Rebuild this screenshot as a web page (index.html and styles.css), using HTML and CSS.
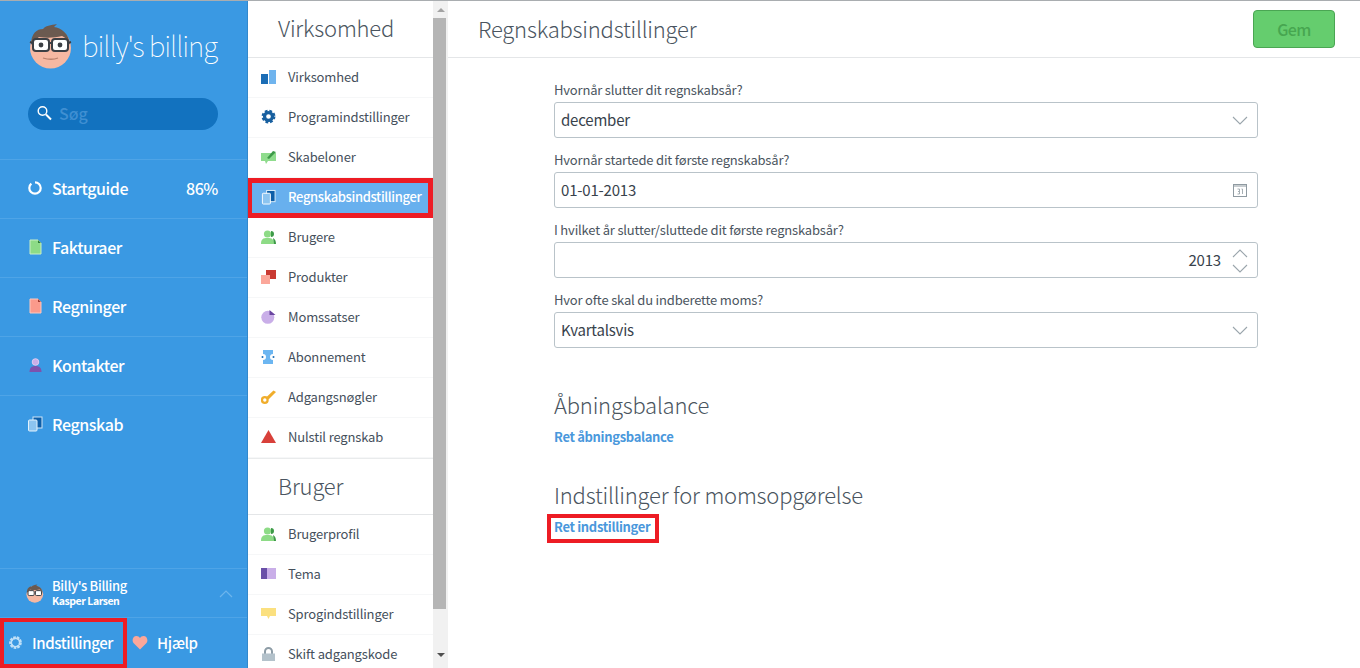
FILE: index.html
```html
<!DOCTYPE html>
<html lang="da">
<head>
<meta charset="utf-8">
<title>Regnskabsindstillinger</title>
<link rel="stylesheet" href="styles.css">
</head>
<body>
<div class="topline"></div>
<div class="app">
  <aside class="sidebar">
    <div class="brand">
      <div class="logo">
        <svg class="face" viewBox="0 0 44 46" width="44" height="46">
          <circle cx="21.5" cy="25" r="20.5" fill="#f6b8a2"/>
          <path d="M2 22C2 10 8 6 14 6c2-3 8-4 14-5l-3 3c7 1 15 6 16 18-2-5-5-8-8-9-8 2-16 2-23 1-3 2-6 5-8 8z" fill="#6b5a50"/>
          <rect x="4" y="16" width="16" height="12" rx="3" fill="#fff" stroke="#3b3f44" stroke-width="2"/>
          <rect x="23" y="16" width="16" height="12" rx="3" fill="#fff" stroke="#3b3f44" stroke-width="2"/>
          <path d="M20 20h3M1 19l3 1M39 20l3-1" stroke="#3b3f44" stroke-width="2" fill="none"/>
          <circle cx="12" cy="22" r="2.400" fill="#3b3f44"/><circle cx="31" cy="22" r="2.400" fill="#3b3f44"/>
          <path d="M14 35c5 1.500 11 1.500 15 0" stroke="#b9806c" stroke-width="1.300" fill="none"/>
        </svg>
        <span class="wordmark">billy's billing</span>
      </div>
      <div class="search">
        <svg viewBox="0 0 16 16" width="16" height="16"><circle cx="6.500" cy="6" r="4.300" fill="none" stroke="#fff" stroke-width="1.400"/><path d="M10 9.500l5 5" stroke="#fff" stroke-width="2"/></svg>
        <span>Søg</span>
      </div>
    </div>
    <nav class="mainnav">
      <a class="mainitem">
        <svg viewBox="0 0 16 16" width="16" height="16"><circle cx="8" cy="8" r="5.700" fill="none" stroke="#fff" stroke-width="2.200" stroke-dasharray="31 5" transform="rotate(-90 8 8)"/></svg>
        <span class="grow">Startguide</span><span>86%</span>
      </a>
      <a class="mainitem">
        <svg viewBox="0 0 16 16" width="16" height="16"><path d="M3 1h8l3 3v11H3z" fill="#8ddb86" stroke="#c8efc5" stroke-width="1"/><path d="M11 1l3 3h-3z" fill="#2f7d3a"/></svg>
        <span class="grow">Fakturaer</span>
      </a>
      <a class="mainitem">
        <svg viewBox="0 0 16 16" width="16" height="16"><path d="M3 1h8l3 3v11H3z" fill="#fb9a8b" stroke="#fcc8bf" stroke-width="1"/><path d="M11 1l3 3h-3z" fill="#a33a30"/></svg>
        <span class="grow">Regninger</span>
      </a>
      <a class="mainitem">
        <svg viewBox="0 0 16 16" width="16" height="16"><circle cx="8.500" cy="5" r="3.300" fill="#c9aee8" stroke="#dccbf2"/><path d="M2.500 15c0-4 2-6 6-6s6 2 6 6z" fill="#7d52ad"/></svg>
        <span class="grow">Kontakter</span>
      </a>
      <a class="mainitem">
        <svg viewBox="0 0 16 16" width="16" height="16"><rect x="6" y="1" width="9" height="11" fill="#0d5ea8" stroke="#cfe6f8"/><rect x="1.500" y="4" width="8.500" height="11" rx="1" fill="#8cc4f0" stroke="#e3f2fc"/></svg>
        <span class="grow">Regnskab</span>
      </a>
    </nav>
    <div class="account">
      <svg class="mini" viewBox="0 0 44 46" width="18" height="19">
        <circle cx="21.500" cy="25" r="20.500" fill="#f6b8a2"/>
        <path d="M2 22C2 10 8 6 14 6c2-3 8-4 14-5l-3 3c7 1 15 6 16 18-2-5-5-8-8-9-8 2-16 2-23 1-3 2-6 5-8 8z" fill="#6b5a50"/>
        <rect x="5" y="16" width="15" height="12" rx="3" fill="#fff" stroke="#3b3f44" stroke-width="2.400"/>
        <rect x="23" y="16" width="15" height="12" rx="3" fill="#fff" stroke="#3b3f44" stroke-width="2.400"/>
      </svg>
      <div class="who">
        <div class="org">Billy's Billing</div>
        <div class="person">Kasper Larsen</div>
      </div>
      <svg class="upchev" viewBox="0 0 14 8" width="14" height="8"><path d="M1 7l6-6 6 6" fill="none" stroke="#6db5ec" stroke-width="1.200"/></svg>
    </div>
    <div class="footer">
      <a class="footitem settings mark">
        <svg viewBox="0 0 16 16" width="15" height="15"><circle cx="8" cy="8" r="5.200" fill="none" stroke="#bfe0f8" stroke-width="3.200" stroke-dasharray="2.600 1"/><circle cx="8" cy="8" r="4.500" fill="none" stroke="#bfe0f8" stroke-width="1.500"/></svg>
        <span>Indstillinger</span>
      </a>
      <a class="footitem help">
        <svg viewBox="0 0 16 15" width="16" height="15"><path d="M8 14.500L1.500 8C-.5 5.500 1 1 4.500 1 6 1 7.300 1.900 8 3c.7-1.100 2-2 3.500-2C15 1 16.500 5.500 14.500 8z" fill="#fba79a"/></svg>
        <span>Hjælp</span>
      </a>
    </div>
  </aside>

  <div class="settingsnav">
    <div class="navscroll">
      <h2 class="navhead">Virksomhed</h2>
      <a class="navitem"><svg viewBox="0 0 15 14" width="15" height="14"><rect y="4" width="7" height="10" fill="#1b6db5"/><rect x="8" width="7" height="14" fill="#6fb4ee"/></svg><span>Virksomhed</span></a>
      <a class="navitem"><svg viewBox="0 0 16 16" width="15" height="15"><circle cx="8" cy="8" r="4.200" fill="none" stroke="#175f9f" stroke-width="3.400"/><circle cx="8" cy="8" r="6.200" fill="none" stroke="#175f9f" stroke-width="2.400" stroke-dasharray="2.900 2"/></svg><span>Programindstillinger</span></a>
      <a class="navitem"><svg viewBox="0 0 15 14" width="15" height="14"><path d="M0 3h15v8H7l-2 3-1-3H0z" fill="#8fdc8d"/><path d="M6 8l6-7 3 1-7 7z" fill="#3d9a48"/></svg><span>Skabeloner</span></a>
      <a class="navitem active"><svg viewBox="0 0 16 16" width="16" height="16"><rect x="6" y="1" width="9" height="12" fill="#0d5ea8" stroke="#e3f2fc"/><rect x="1.500" y="4" width="8.500" height="11.500" rx="1" fill="#8cc4f0" stroke="#fff"/></svg><span>Regnskabsindstillinger</span></a>
      <a class="navitem"><svg viewBox="0 0 15 14" width="15" height="14"><circle cx="6.500" cy="4" r="3.600" fill="#8ddb86"/><path d="M0 14c0-5 2-6 6.500-6S13 9 13 14z" fill="#8ddb86"/><path d="M10 1a3 3 0 0 1 0 6M12 8c2 1 3 3 3 6h-2" fill="#3d9a48"/></svg><span>Brugere</span></a>
      <a class="navitem"><svg viewBox="0 0 15 14" width="15" height="14"><rect x="5" width="10" height="9" fill="#c93a32"/><rect y="5" width="9" height="9" fill="#fba79a"/></svg><span>Produkter</span></a>
      <a class="navitem"><svg viewBox="0 0 15 14" width="15" height="14"><circle cx="6.800" cy="7.300" r="6.500" fill="#c9aee8"/><path d="M8.500 0l6 5H8.500z" fill="#6a45a0"/></svg><span>Momssatser</span></a>
      <a class="navitem"><svg viewBox="0 0 15 14" width="15" height="14"><path d="M2 0h10v4a3 3 0 0 0 0 6v4H2v-4a3 3 0 0 0 0-6z" fill="#6cb6f1"/><circle cx="1.500" cy="7" r="1" fill="#1b6db5"/><circle cx="12.500" cy="7" r="1" fill="#1b6db5"/></svg><span>Abonnement</span></a>
      <a class="navitem"><svg viewBox="0 0 15 14" width="15" height="14"><circle cx="3.800" cy="10" r="2.800" fill="none" stroke="#f0ad2b" stroke-width="2.200"/><path d="M5 7.500L12.500 .5 15 2l-7.500 7.500z" fill="#f0ad2b"/></svg><span>Adgangsnøgler</span></a>
      <a class="navitem"><svg viewBox="0 0 15 13" width="15" height="13"><path d="M7.500 0L15 13H0z" fill="#d8403a"/></svg><span>Nulstil regnskab</span></a>
      <h2 class="navhead second">Bruger</h2>
      <a class="navitem"><svg viewBox="0 0 15 14" width="15" height="14"><circle cx="6.500" cy="4" r="3.600" fill="#8ddb86"/><path d="M0 14c0-5 2-6 6.500-6S13 9 13 14z" fill="#8ddb86"/><path d="M10 1a3 3 0 0 1 0 6M12 8c2 1 3 3 3 6h-2" fill="#3d9a48"/></svg><span>Brugerprofil</span></a>
      <a class="navitem"><svg viewBox="0 0 15 11" width="15" height="11"><rect width="6" height="11" fill="#6a4fa8"/><rect x="6" width="9" height="11" fill="#c9aee8"/></svg><span>Tema</span></a>
      <a class="navitem"><svg viewBox="0 0 15 12" width="15" height="12"><path d="M0 0h15v8H9l-1.500 3L6 8H0z" fill="#fbe07f"/></svg><span>Sprogindstillinger</span></a>
      <a class="navitem"><svg viewBox="0 0 13 14" width="13" height="14"><path d="M3 7V4.500a3.500 3.500 0 0 1 7 0V7" fill="none" stroke="#8d9ca6" stroke-width="2"/><rect y="6.500" width="13" height="7.500" fill="#b4c2cb"/></svg><span>Skift adgangskode</span></a>
    </div>
    <div class="scrollbar">
      <span class="arrow up"></span>
      <span class="thumb"></span>
      <span class="arrow down"></span>
    </div>
  </div>

  <main class="content">
    <header class="pagehead">
      <h1>Regnskabsindstillinger</h1>
      <button class="save" type="button">Gem</button>
    </header>
    <div class="form">
      <div class="field">
        <label>Hvornår slutter dit regnskabsår?</label>
        <div class="control"><span class="value">december</span>
          <svg class="chev" viewBox="0 0 16 9" width="16" height="9"><path d="M1 1l7 7 7-7" fill="none" stroke="#9aa5ac" stroke-width="1.100"/></svg></div>
      </div>
      <div class="field">
        <label>Hvornår startede dit første regnskabsår?</label>
        <div class="control"><span class="value">01-01-2013</span>
          <svg class="cal" viewBox="0 0 14 13" width="14" height="13"><rect x=".5" y=".5" width="13" height="12" fill="none" stroke="#8f9aa1"/><path d="M1 2h12" stroke="#8f9aa1" stroke-width="1"/><path d="M4.500 5h2v5h-2M6 7.500H5M8.500 5h1v5" fill="none" stroke="#8f9aa1" stroke-width=".8"/></svg></div>
      </div>
      <div class="field">
        <label>I hvilket år slutter/sluttede dit første regnskabsår?</label>
        <div class="control number"><span class="value">2013</span>
          <span class="spin">
            <svg viewBox="0 0 16 9" width="16" height="9"><path d="M1 8l7-7 7 7" fill="none" stroke="#9aa5ac" stroke-width="1.100"/></svg>
            <svg viewBox="0 0 16 9" width="16" height="9"><path d="M1 1l7 7 7-7" fill="none" stroke="#9aa5ac" stroke-width="1.100"/></svg>
          </span></div>
      </div>
      <div class="field">
        <label>Hvor ofte skal du indberette moms?</label>
        <div class="control"><span class="value">Kvartalsvis</span>
          <svg class="chev" viewBox="0 0 16 9" width="16" height="9"><path d="M1 1l7 7 7-7" fill="none" stroke="#9aa5ac" stroke-width="1.100"/></svg></div>
      </div>
      <section class="block first">
        <h3>Åbningsbalance</h3>
        <a class="link">Ret åbningsbalance</a>
      </section>
      <section class="block">
        <h3>Indstillinger for momsopgørelse</h3>
        <a class="link boxed">Ret indstillinger</a>
      </section>
    </div>
  </main>
</div>
</body>
</html>
```

FILE: styles.css
```css
* { box-sizing: border-box; }
html, body { margin: 0; height: 100%; overflow: hidden; }
body {
  font-family: "Noto Sans CJK JP", "Noto Sans", "Liberation Sans", sans-serif;
  background: #fff;
  color: #3f4a56;
}
.topline { height: 1px; background: #a9adb0; }
.app { display: flex; height: 667px; }

/* Sidebar */
.sidebar {
  width: 248px;
  flex: none;
  background: #3a99e3;
  color: #fff;
  display: flex;
  flex-direction: column;
  border-right: 1px solid #3288cc;
}
.brand { height: 158px; padding: 22px 29px 0 28px; }
.logo { display: flex; align-items: center; gap: 9px; height: 46px; }
.face { flex: none; margin-left: 1px; }
.wordmark { font-size: 28px; font-weight: 100; line-height: 46px; white-space: nowrap; letter-spacing: -1.050px; margin-top: -2px; }
.search {
  margin-top: 29px;
  height: 32px;
  border-radius: 16px;
  background: #1272bf;
  display: flex;
  align-items: center;
  padding: 0 0 2px 8px;
  gap: 7px;
  font-size: 16px;
  font-weight: 500;
  color: #3f8fd2;
}
.mainnav { flex: 1; }
.mainitem {
  height: 59px;
  display: flex;
  align-items: center;
  gap: 9px;
  padding: 0 29px 2px 27px;
  border-top: 1px solid #4ea4e7;
  font-size: 16px;
  font-weight: 500;
  letter-spacing: -.4px;
  line-height: 22px;
}
.mainitem svg { flex: none; }
.grow { flex: 1; }
.account {
  height: 49px;
  display: flex;
  align-items: center;
  padding: 0 14px 0 26px;
  border-top: 1px solid #4ea4e7;
  gap: 8px;
}
.who { flex: 1; }
.org { font-size: 13px; font-weight: 500; line-height: 15px; letter-spacing: -.3px; }
.person { font-size: 10.500px; font-weight: 700; line-height: 15px; letter-spacing: -.45px; }
.upchev { margin-top: 2px; }
.footer {
  height: 51px;
  display: flex;
  border-top: 1px solid #4ea4e7;
  font-size: 15px;
  font-weight: 500;
  letter-spacing: -.4px;
}
.footitem { display: flex; align-items: center; height: 50px; padding-bottom: 2px; }
.settings { width: 127px; padding-left: 8px; gap: 9px; }
.help { padding-left: 5px; gap: 9px; }
.mark { box-shadow: inset 0 0 0 4px #ed1c24; }

/* Settings nav */
.settingsnav { width: 200px; flex: none; display: flex; overflow: hidden; }
.navscroll { width: 185px; flex: none; }
.navhead {
  margin: 0;
  height: 57px;
  padding-left: 30px;
  font-size: 22px;
  font-weight: 300;
  letter-spacing: -.2px;
  line-height: 53px;
  border-bottom: 1px solid #e4e6e8;
  color: #4a5560;
}
.navhead.second { border-top: 1px solid #e9ebec; }
.navitem {
  height: 40px;
  display: flex;
  align-items: center;
  gap: 12px;
  padding: 0 0 2px 13px;
  font-size: 13px;
  letter-spacing: -.15px;
  line-height: 20px;
  color: #45505c;
  border-bottom: 1px solid #f6f7f8;
  white-space: nowrap;
}
.navitem svg { flex: none; width: 15px; }
.navitem.active {
  width: 186px;
  margin-left: -1px;
  padding-left: 14px;
  background: #68b0ee;
  color: #fff;
  font-weight: 500;
  letter-spacing: -.35px;
  border-bottom: 0;
  box-shadow: inset 0 0 0 5px #ed1c24;
}
.scrollbar {
  width: 15px;
  flex: none;
  background: #f1f1f1;
  display: flex;
  flex-direction: column;
  align-items: center;
}
.arrow { width: 0; height: 0; border-left: 4px solid transparent; border-right: 4px solid transparent; }
.arrow.up { border-bottom: 4px solid #a3a3a3; margin: 7px 0 6px; }
.arrow.down { border-top: 4px solid #505050; margin-top: 44px; }
.thumb { width: 13px; height: 591px; background: #b5b5b5; flex: none; align-self: flex-start; }

/* Main */
.content { flex: 1; min-width: 0; }
.pagehead {
  height: 57px;
  display: flex;
  align-items: center;
  justify-content: space-between;
  padding: 0 25px 0 30px;
  border-bottom: 1px solid #e4e6e8;
}
.pagehead h1 { margin: -3px 0 0; font-size: 22px; font-weight: 300; letter-spacing: -.2px; color: #4a5560; line-height: 50px; }
.save {
  width: 82px;
  height: 38px;
  border: 1px solid #4aa653;
  border-radius: 4px;
  background: #65cd6e;
  color: #47a650;
  font: 500 16px/22px "Noto Sans CJK JP", "Noto Sans", sans-serif;
  letter-spacing: -.6px;
}
.form { width: 704px; margin-left: 106px; padding-top: 23px; }
.field { height: 70px; }
.field label { display: block; height: 21px; font-size: 13px; letter-spacing: -.18px; line-height: 18px; color: #4b5560; }
.control {
  height: 36px;
  border: 1px solid #b9c3c9;
  border-radius: 3px;
  display: flex;
  align-items: center;
  justify-content: space-between;
  padding: 0 9px 2px 6px;
  font-size: 15px;
  letter-spacing: -.2px;
  color: #38424c;
}
.control.number { justify-content: flex-end; gap: 11px; }
.cal { margin: 2px 1px 0 0; }
.chev { margin-top: 2px; }
.spin { display: flex; flex-direction: column; gap: 6px; margin-top: 3px; }
.spin svg { display: block; }
.block { height: 90px; }
.block.first { margin-top: 26px; }
.block h3 { margin: 0; font-size: 22px; font-weight: 300; letter-spacing: -.2px; line-height: 34px; height: 36px; color: #4a5560; }
.link { display: inline-block; font-size: 13px; font-weight: 700; letter-spacing: -.33px; line-height: 18px; padding-bottom: 3px; color: #4a98dc; }
.boxed { margin-left: -3px; padding: 0 5px 3px 3px; outline: 4px solid #ed1c24; background: #fff; }
```
